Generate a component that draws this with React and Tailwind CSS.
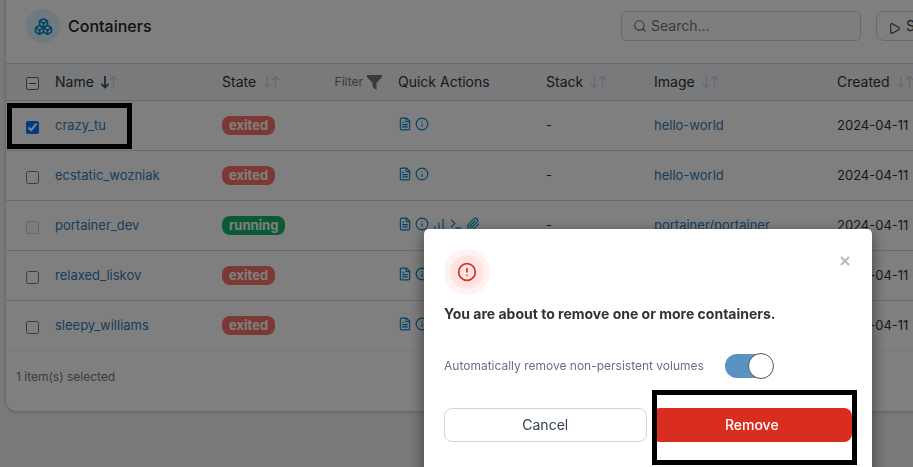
import React from 'react';
import { Boxes, FileText, Info, Terminal, Paperclip, Search, Play, AlertCircle } from 'lucide-react';

const rows = [
  { name: 'crazy_tu', state: 'exited', image: 'hello-world', checked: true },
  { name: 'ecstatic_wozniak', state: 'exited', image: 'hello-world' },
  { name: 'portainer_dev', state: 'running', image: 'portainer/portainer', disabled: true },
  { name: 'relaxed_liskov', state: 'exited', image: 'hello-world' },
  { name: 'sleepy_williams', state: 'exited', image: 'hello-world' },
];

function SortArrows({ active }) {
  return (
    <svg width="18" height="16" viewBox="0 0 18 16" fill="none" aria-hidden="true">
      <path
        d="M5 2v11.500M1.500 10l3.500 3.500 3.500-3.500"
        stroke={active ? '#475467' : '#d0d5dd'}
        strokeWidth={active ? 1.8 : 1.4}
      />
      <path d="M13.500 14v-11.500M10 6l3.500-3.500 3.500 3.500" stroke="#d0d5dd" strokeWidth="1.400" />
    </svg>
  );
}

function HeaderCell({ label, active, children }) {
  return (
    <th className="h-[37px] p-0 text-left font-normal">
      <div className="flex items-center">
        <span>{label}</span>
        <button type="button" aria-label={`Sort by ${label}`} className="ml-[6px]">
          <SortArrows active={active} />
        </button>
        {children}
      </div>
    </th>
  );
}

function QuickActions({ running }) {
  const link = 'text-[#0086c9]';
  return (
    <div className="flex items-center gap-[3px] pb-1">
      <a href="#logs" aria-label="Logs" className={link}><FileText size={14} /></a>
      <a href="#inspect" aria-label="Inspect" className={link}><Info size={14} /></a>
      {running && (
        <>
          <a href="#stats" aria-label="Stats" className={link}>
            <svg width="14" height="14" viewBox="0 0 24 24" fill="none" stroke="currentColor" strokeWidth="2" strokeLinecap="round">
              <path d="M5 20v-4M12 20V10M19 20V4" />
            </svg>
          </a>
          <a href="#console" aria-label="Console" className={link}><Terminal size={14} /></a>
          <a href="#attach" aria-label="Attach" className={link}><Paperclip size={14} /></a>
        </>
      )}
    </div>
  );
}

function ContainerRow({ row }) {
  return (
    <tr className="h-[50px] border-t border-[#d5d7da] text-[13px]">
      <td className="relative p-0 pl-5">
        <input
          type="checkbox"
          aria-label={`Select ${row.name}`}
          defaultChecked={row.checked}
          disabled={row.disabled}
          className="mt-1 block size-[13px]"
        />
        {row.checked && (
          <span className="pointer-events-none absolute top-[2px] left-px h-[46px] w-[125px] border-[5px] border-black" />
        )}
      </td>
      <td className="p-0"><a href="#container" className="text-[#337ab7]">{row.name}</a></td>
      <td className="p-0">
        <span
          className={
            'inline-block rounded-lg px-[7px] text-[13px] leading-[19px] font-bold text-white ' +
            (row.state === 'running' ? 'bg-[#12b76a]' : 'bg-[#f97066]')
          }
        >
          {row.state}
        </span>
      </td>
      <td className="p-0"><QuickActions running={row.state === 'running'} /></td>
      <td className="p-0">-</td>
      <td className="p-0"><a href="#image" className="text-[#337ab7]">{row.image}</a></td>
      <td className="p-0">2024-04-11</td>
    </tr>
  );
}

function ContainersPanel() {
  const setMixed = (el) => {
    if (el) el.indeterminate = true;
  };
  return (
    <section className="-mt-3 ml-[5px] min-w-[980px] overflow-hidden rounded-xl border border-[#d0d5dd] bg-white shadow-sm">
      <header className="flex h-[74px] items-center pl-5">
        <span className="flex size-[34px] items-center justify-center rounded-full bg-[#e0f2fe] text-[#0086c9]">
          <Boxes size={19} />
        </span>
        <h1 className="ml-2 text-base font-medium text-[#222]">Containers</h1>
        <div className="ml-auto flex gap-[15px] pr-[18px]">
          <label className="flex h-[30px] w-[240px] items-center gap-1 rounded-[5px] border border-[#d0d5dd] bg-[#fcfcfd] px-[11px]">
            <Search size={14} className="shrink-0 text-[#667085]" />
            <input
              type="text"
              aria-label="Search"
              placeholder="Search..."
              className="w-full bg-transparent text-sm outline-none placeholder:text-[#757575]"
            />
          </label>
          <button type="button" className="flex h-[30px] w-[90px] items-center gap-[5px] rounded-lg border border-[#d0d5dd] px-[11px] text-sm text-[#344054]">
            <Play size={13} className="mt-1" />
            Start
          </button>
        </div>
      </header>
      <table className="w-full table-fixed border-collapse text-[#333]">
        <colgroup>
          <col className="w-[49px]" />
          <col className="w-[167px]" />
          <col className="w-[176px]" />
          <col className="w-[148px]" />
          <col className="w-[108px]" />
          <col className="w-[183px]" />
          <col />
        </colgroup>
        <thead className="border-t border-[#d0d5dd] bg-[#f2f4f7] text-sm">
          <tr>
            <th className="p-0 pl-5">
              <input
                ref={setMixed}
                type="checkbox"
                aria-label="Select all"
                className="mt-[2px] flex size-[13px] appearance-none items-center justify-center rounded-[2px] border border-[#666] bg-white before:h-px before:w-[7px] before:bg-[#555]"
              />
            </th>
            <HeaderCell label="Name" active />
            <HeaderCell label="State">
              <button type="button" className="mr-4 ml-auto flex items-center gap-1 text-xs text-[#777]">
                Filter
                <svg width="15" height="15" viewBox="0 0 15 15" fill="#777" aria-hidden="true">
                  <path d="M0 0h15v2L9.500 8v7L5.500 12V8L0 2z" />
                </svg>
              </button>
            </HeaderCell>
            <th className="p-0 text-left font-normal">Quick Actions</th>
            <HeaderCell label="Stack" />
            <HeaderCell label="Image" />
            <HeaderCell label="Created" />
          </tr>
        </thead>
        <tbody>
          {rows.map((row) => <ContainerRow key={row.name} row={row} />)}
        </tbody>
      </table>
      <footer className="h-[60px] border-t border-[#f2f4f7] px-[10px] pt-4 text-xs leading-[18px] text-[#777]">
        1 item(s) selected
      </footer>
    </section>
  );
}

function RemoveDialog() {
  return (
    <div className="fixed inset-0 flex items-start justify-end overflow-hidden bg-black/50 pt-[229px] pr-[41px]">
      <div role="dialog" aria-labelledby="dialog-title" className="w-[448px] rounded-[5px] bg-white px-5 pt-5 pb-10 shadow-[0_5px_15px_rgba(0,0,0,0.5)]">
        <div className="flex items-start justify-between">
          <span className="flex size-[46px] items-center justify-center rounded-full bg-[#fef3f2]">
            <span className="flex size-[34px] items-center justify-center rounded-full bg-[#fee4e2] text-[#d92d20]">
              <AlertCircle size={20} />
            </span>
          </span>
          <button type="button" aria-label="Close" className="mt-[7px] mr-[2px] text-[#bbb]">
            <svg width="10" height="10" viewBox="0 0 10 10" stroke="currentColor" strokeWidth="2.200" aria-hidden="true">
              <path d="M1 1l8 8M9 1l-8 8" />
            </svg>
          </button>
        </div>
        <h2 id="dialog-title" className="mt-[9px] text-sm leading-5 font-bold text-[#333]">
          You are about to remove one or more containers.
        </h2>
        <label className="mt-[29px] flex items-center text-xs text-[#667085]">
          Automatically remove non-persistent volumes
          <span className="relative ml-[21px] flex h-[26px] w-[49px] items-center">
            <input type="checkbox" defaultChecked className="h-6 w-12 appearance-none rounded-full bg-[#5b92c4]" />
            <span className="absolute top-0 right-0 size-[26px] rounded-full border border-[#555] bg-white" />
          </span>
        </label>
        <div className="relative mt-[29px] flex gap-[5px] text-sm">
          <button type="button" className="h-[34px] flex-1 rounded-lg border border-[#d0d5dd] text-[#344054]">Cancel</button>
          <button type="button" className="h-[34px] flex-1 rounded-lg bg-[#d92d20] font-medium text-white">Remove</button>
          <span className="pointer-events-none absolute -top-[18px] -right-[5px] h-[75px] w-[205px] border-[5px] border-black" />
        </div>
      </div>
    </div>
  );
}

export default function App() {
  return (
    <main className="min-h-screen overflow-hidden bg-[#f2f2f2] font-['Inter','Liberation_Sans',sans-serif]">
      <ContainersPanel />
      <RemoveDialog />
    </main>
  );
}
